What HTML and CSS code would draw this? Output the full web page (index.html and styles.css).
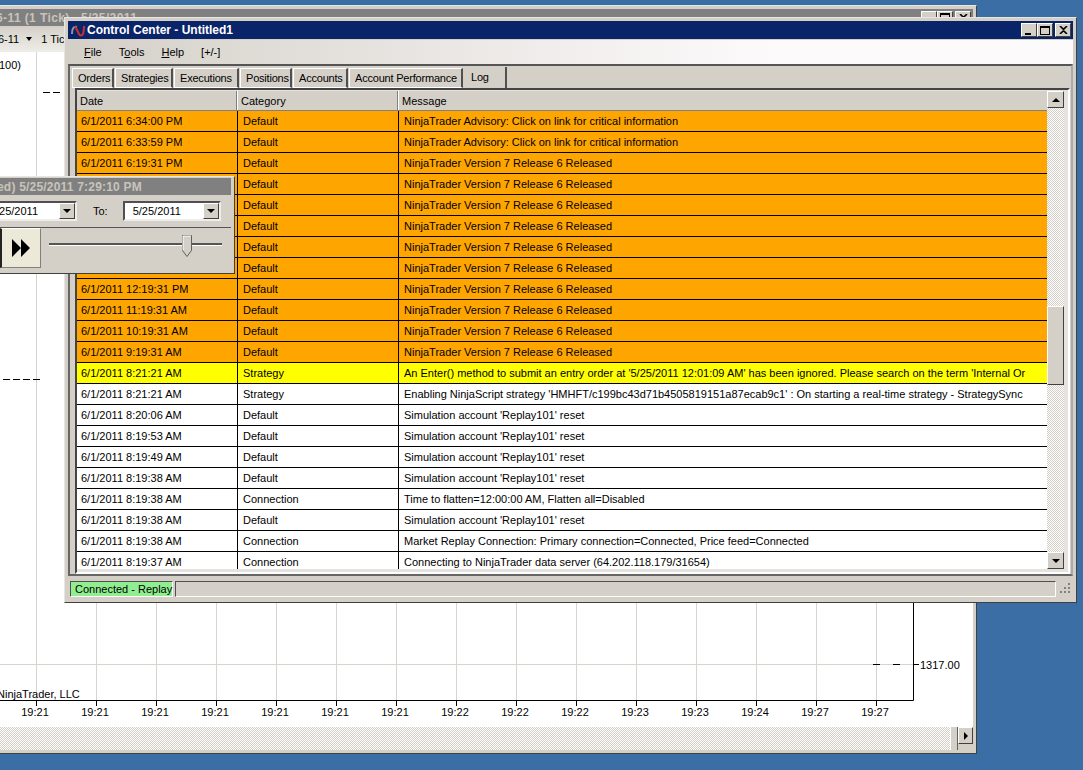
FILE: index.html
```html
<!DOCTYPE html>
<html lang="en">
<head>
    <meta charset="UTF-8">
    <title>Control Center - Untitled1</title>
    <link rel="stylesheet" href="styles.css">
</head>
<body>
    <!-- chart window behind everything -->
    <div class="window chart-window">
        <div class="titlebar inactive chart-title">
            <span class="chart-title-text">6-11 (1 Tick)&nbsp;&nbsp; 5/25/2011</span>
            <div class="caption-btns">
                <span class="cap-btn"><i class="ic-min"></i></span>
                <span class="cap-btn"><i class="ic-max"></i></span>
                <span class="cap-btn"><svg width="9" height="8" viewBox="0 0 9 8"><path d="M1 0l3.500 3.300L8 0M1 8l3.500-3.300L8 8" fill="none" stroke="#000" stroke-width="1.600"/></svg></span>
            </div>
        </div>
        <div class="chart-toolbar">
            <span>6-11</span>
            <span class="tb-arrow"></span>
            <span class="tb-tick">1 Tick</span>
        </div>
        <div class="chart-area">
            <svg class="chart-lines" width="977" height="675" viewBox="0 0 977 675" fill="none">
                <g stroke="#d8d4d0" stroke-width="1">
                    <path d="M36.500 0V648M96.500 0V648M156.500 0V648M216.500 0V648M276.500 0V648M336.500 0V648M396.500 0V648M456.500 0V648M516.500 0V648M576.500 0V648M636.500 0V648M696.500 0V648M756.500 0V648M816.500 0V648M876.500 0V648"/>
                    <path d="M0 612.500H913"/>
                </g>
                <g stroke="#000" stroke-width="1">
                    <path d="M0 648.500H913.500V0"/>
                    <path d="M36.500 649v5M96.500 649v5M156.500 649v5M216.500 649v5M276.500 649v5M336.500 649v5M396.500 649v5M456.500 649v5M516.500 649v5M576.500 649v5M636.500 649v5M696.500 649v5M756.500 649v5M816.500 649v5M876.500 649v5"/>
                    <path d="M914 612.500h5"/>
                    <path d="M873 612.500h7M893 612.500h7"/>
                    <path d="M43 40.500h7M53 40.500h7"/>
                    <path d="M3 327.500h7M13 327.500h7M23 327.500h7M33 327.500h7"/>
                </g>
            </svg>
            <span class="price-top">100)</span>
            <span class="copyright">NinjaTrader, LLC</span>
            <span class="price-label">1317.00</span>
            <div class="time-axis">
                <span>19:21</span><span>19:21</span><span>19:21</span><span>19:21</span><span>19:21</span>
                <span>19:21</span><span>19:21</span><span>19:22</span><span>19:22</span><span>19:22</span>
                <span>19:23</span><span>19:23</span><span>19:24</span><span>19:27</span><span>19:27</span>
            </div>
        </div>
        <div class="chart-scroll">
            <div class="hscroll-track"></div>
            <div class="hscroll-thumb"></div>
            <div class="scroll-btn hscroll-btn"><span class="arrow-right"></span></div>
        </div>
    </div>

    <!-- control center -->
    <div class="window cc-window">
        <div class="titlebar active">
            <svg class="cc-logo" width="15" height="13" viewBox="0 0 15 13" fill="none">
                <path d="M1 10C1 4 3 2 6 3" stroke="#8a93a8" stroke-width="2"/>
                <path d="M4 2l4 8c1 2 3 2 4 0 1-3 1-5 1-8" stroke="#c8342c" stroke-width="2"/>
            </svg>
            <span class="cc-title">Control Center - Untitled1</span>
            <div class="caption-btns">
                <span class="cap-btn"><i class="ic-min"></i></span>
                <span class="cap-btn"><i class="ic-max"></i></span>
                <span class="cap-btn"><svg width="9" height="8" viewBox="0 0 9 8"><path d="M1 0l3.500 3.300L8 0M1 8l3.500-3.300L8 8" fill="none" stroke="#000" stroke-width="1.600"/></svg></span>
            </div>
        </div>
        <div class="menubar">
            <span class="menu-item"><u>F</u>ile</span>
            <span class="menu-item">T<u>o</u>ols</span>
            <span class="menu-item"><u>H</u>elp</span>
            <span class="menu-item">[+/-]</span>
        </div>
        <div class="tab-pane">
            <div class="tabstrip">
                <span class="tab tab-orders">Orders</span>
                <span class="tab tab-strategies">Strategies</span>
                <span class="tab tab-executions">Executions</span>
                <span class="tab tab-positions">Positions</span>
                <span class="tab tab-accounts">Accounts</span>
                <span class="tab tab-perf">Account Performance</span>
                <span class="tab tab-active">Log</span>
            </div>
            <div class="grid-frame">
                <div class="grid-main">
                    <div class="log-head">
                        <div class="cell col-date">Date</div>
                        <div class="cell col-cat">Category</div>
                        <div class="cell col-msg">Message</div>
                    </div>
                    <div class="log-body">
                        <div class="row orange"><div class="cell col-date">6/1/2011 6:34:00 PM</div><div class="cell col-cat">Default</div><div class="cell col-msg">NinjaTrader Advisory: Click on link for critical information</div></div>
                        <div class="row orange"><div class="cell col-date">6/1/2011 6:33:59 PM</div><div class="cell col-cat">Default</div><div class="cell col-msg">NinjaTrader Advisory: Click on link for critical information</div></div>
                        <div class="row orange"><div class="cell col-date">6/1/2011 6:19:31 PM</div><div class="cell col-cat">Default</div><div class="cell col-msg">NinjaTrader Version 7 Release 6 Released</div></div>
                        <div class="row orange"><div class="cell col-date">6/1/2011 5:19:31 PM</div><div class="cell col-cat">Default</div><div class="cell col-msg">NinjaTrader Version 7 Release 6 Released</div></div>
                        <div class="row orange"><div class="cell col-date">6/1/2011 4:19:31 PM</div><div class="cell col-cat">Default</div><div class="cell col-msg">NinjaTrader Version 7 Release 6 Released</div></div>
                        <div class="row orange"><div class="cell col-date">6/1/2011 3:19:31 PM</div><div class="cell col-cat">Default</div><div class="cell col-msg">NinjaTrader Version 7 Release 6 Released</div></div>
                        <div class="row orange"><div class="cell col-date">6/1/2011 2:19:31 PM</div><div class="cell col-cat">Default</div><div class="cell col-msg">NinjaTrader Version 7 Release 6 Released</div></div>
                        <div class="row orange"><div class="cell col-date">6/1/2011 1:19:31 PM</div><div class="cell col-cat">Default</div><div class="cell col-msg">NinjaTrader Version 7 Release 6 Released</div></div>
                        <div class="row orange"><div class="cell col-date">6/1/2011 12:19:31 PM</div><div class="cell col-cat">Default</div><div class="cell col-msg">NinjaTrader Version 7 Release 6 Released</div></div>
                        <div class="row orange"><div class="cell col-date">6/1/2011 11:19:31 AM</div><div class="cell col-cat">Default</div><div class="cell col-msg">NinjaTrader Version 7 Release 6 Released</div></div>
                        <div class="row orange"><div class="cell col-date">6/1/2011 10:19:31 AM</div><div class="cell col-cat">Default</div><div class="cell col-msg">NinjaTrader Version 7 Release 6 Released</div></div>
                        <div class="row orange"><div class="cell col-date">6/1/2011 9:19:31 AM</div><div class="cell col-cat">Default</div><div class="cell col-msg">NinjaTrader Version 7 Release 6 Released</div></div>
                        <div class="row yellow"><div class="cell col-date">6/1/2011 8:21:21 AM</div><div class="cell col-cat">Strategy</div><div class="cell col-msg">An Enter() method to submit an entry order at '5/25/2011 12:01:09 AM' has been ignored. Please search on the term 'Internal Or</div></div>
                        <div class="row"><div class="cell col-date">6/1/2011 8:21:21 AM</div><div class="cell col-cat">Strategy</div><div class="cell col-msg">Enabling NinjaScript strategy 'HMHFT/c199bc43d71b4505819151a87ecab9c1' : On starting a real-time strategy - StrategySync</div></div>
                        <div class="row"><div class="cell col-date">6/1/2011 8:20:06 AM</div><div class="cell col-cat">Default</div><div class="cell col-msg">Simulation account 'Replay101' reset</div></div>
                        <div class="row"><div class="cell col-date">6/1/2011 8:19:53 AM</div><div class="cell col-cat">Default</div><div class="cell col-msg">Simulation account 'Replay101' reset</div></div>
                        <div class="row"><div class="cell col-date">6/1/2011 8:19:49 AM</div><div class="cell col-cat">Default</div><div class="cell col-msg">Simulation account 'Replay101' reset</div></div>
                        <div class="row"><div class="cell col-date">6/1/2011 8:19:38 AM</div><div class="cell col-cat">Default</div><div class="cell col-msg">Simulation account 'Replay101' reset</div></div>
                        <div class="row"><div class="cell col-date">6/1/2011 8:19:38 AM</div><div class="cell col-cat">Connection</div><div class="cell col-msg">Time to flatten=12:00:00 AM, Flatten all=Disabled</div></div>
                        <div class="row"><div class="cell col-date">6/1/2011 8:19:38 AM</div><div class="cell col-cat">Default</div><div class="cell col-msg">Simulation account 'Replay101' reset</div></div>
                        <div class="row"><div class="cell col-date">6/1/2011 8:19:38 AM</div><div class="cell col-cat">Connection</div><div class="cell col-msg">Market Replay Connection: Primary connection=Connected, Price feed=Connected</div></div>
                        <div class="row"><div class="cell col-date">6/1/2011 8:19:37 AM</div><div class="cell col-cat">Connection</div><div class="cell col-msg">Connecting to NinjaTrader data server (64.202.118.179/31654)</div></div>
                    </div>
                </div>
                <div class="vscroll">
                    <div class="scroll-btn"><span class="arrow-up"></span></div>
                    <div class="vscroll-track">
                        <div class="vscroll-thumb"></div>
                    </div>
                    <div class="scroll-btn"><span class="arrow-down"></span></div>
                </div>
            </div>
        </div>
        <div class="statusbar">
            <span class="status-conn">Connected - Replay</span>
            <span class="status-rest"></span>
            <svg class="grip" width="13" height="13" viewBox="0 0 13 13" fill="#808080">
                <path d="M10 1h2v2h-2zM6 5h2v2H6zM10 5h2v2h-2zM2 9h2v2H2zM6 9h2v2H6zM10 9h2v2h-2z"/>
            </svg>
        </div>
    </div>

    <!-- replay controller -->
    <div class="window replay-window">
        <div class="titlebar replay-title">ed) 5/25/2011 7:29:10 PM</div>
        <div class="replay-dates">
            <div class="combo combo-from"><span>25/2011</span><span class="combo-btn"><span class="arrow-down"></span></span></div>
            <span class="to-label">To:</span>
            <div class="combo combo-to"><span>5/25/2011</span><span class="combo-btn"><span class="arrow-down"></span></span></div>
        </div>
        <div class="replay-controls">
            <div class="play-btn">
                <svg width="18" height="18" viewBox="0 0 18 18"><path d="M0 0l9 9-9 9zM9 0l9 9-9 9z"/></svg>
            </div>
            <div class="slider">
                <div class="slider-line"></div>
                <svg class="slider-knob" width="10" height="23" viewBox="0 0 10 23">
                    <path d="M.5.500h9v15l-4.500 6-4.500-6z" fill="#d4d0c8" stroke="#606060"/>
                    <path d="M1 15V1h8" fill="none" stroke="#fff"/>
                </svg>
            </div>
        </div>
    </div>
</body>
</html>
```

FILE: styles.css
```css
/* desktop */
body {
    margin: 0;
    width: 1083px;
    height: 770px;
    overflow: hidden;
    position: relative;
    background-color: #3a6ea5;
    font-family: "Liberation Sans", Arial, sans-serif;
    font-size: 11px;
    color: #000;
}

/* classic raised window */
.window {
    position: absolute;
    box-sizing: border-box;
    background-color: #d4d0c8;
    border: 1px solid;
    border-color: #e8e6e0 #404040 #404040 #e8e6e0;
    padding: 3px;
    display: flex;
    flex-direction: column;
}

.titlebar {
    display: flex;
    align-items: center;
    flex-shrink: 0;
    font-weight: bold;
    font-size: 12px;
    white-space: nowrap;
}

.titlebar.active {
    height: 18px;
    background-color: #0a246a;
    color: #fff;
}

.titlebar.inactive {
    height: 17px;
    background-color: #808080;
    color: #c8c4bc;
}

.caption-btns {
    margin-left: auto;
    display: flex;
    padding-right: 2px;
}

.cap-btn {
    width: 16px;
    height: 14px;
    box-sizing: border-box;
    background-color: #d4d0c8;
    border: 1px solid;
    border-color: #fff #404040 #404040 #fff;
    display: flex;
    align-items: center;
    justify-content: center;
}

.cap-btn:last-child {
    margin-left: 2px;
}

.ic-min {
    width: 6px;
    height: 2px;
    background-color: #000;
    margin-top: 8px;
    margin-right: 2px;
}

.ic-max {
    width: 10px;
    height: 9px;
    box-sizing: border-box;
    border: 1px solid #000;
    border-top-width: 2px;
}

/* chart window */
.chart-window {
    left: -40px;
    top: 5px;
    width: 1017px;
    height: 749px;
    padding: 3px 3px 3px 0;
}

.chart-title-text {
    margin-left: 35px;
    letter-spacing: 0.4px;
}

.chart-toolbar {
    height: 26px;
    box-sizing: border-box;
    flex-shrink: 0;
    display: flex;
    align-items: center;
    padding-left: 37px;
    padding-bottom: 1px;
    gap: 7px;
    background: linear-gradient(#d4d0c8, #efede8);
}

.tb-arrow {
    width: 0;
    height: 0;
    border: 3px solid transparent;
    border-top: 4px solid #000;
    border-bottom: 0;
}

.tb-tick {
    margin-left: 2px;
}

.chart-area {
    position: relative;
    height: 675px;
    flex-shrink: 0;
    background-color: #fff;
    overflow: hidden;
}

.chart-lines {
    position: absolute;
    left: 39px;
    top: 0;
}

.price-top {
    position: absolute;
    left: 38px;
    top: 7px;
}

.copyright {
    position: absolute;
    left: 36px;
    top: 636px;
}

.price-label {
    position: absolute;
    left: 959px;
    top: 607px;
}

.time-axis {
    position: absolute;
    left: 44px;
    top: 654px;
    display: flex;
}

.time-axis span {
    width: 60px;
    text-align: center;
}

.chart-scroll {
    flex: 1;
    display: flex;
    background-color: #d4d0c8;
}

.hscroll-track {
    flex: 1;
    background: repeating-conic-gradient(#d4d0c8 0 25%, #fff 0 50%) 0 0 / 2px 2px;
}

.hscroll-thumb {
    width: 8px;
    box-sizing: border-box;
    background-color: #d4d0c8;
    border-left: 1px solid #fff;
    border-right: 1px solid #606060;
}

.hscroll-btn {
    width: 15px;
    height: auto;
}

/* scrollbar bits shared by both windows */
.scroll-btn {
    box-sizing: border-box;
    flex-shrink: 0;
    height: 17px;
    background-color: #d4d0c8;
    border: 1px solid;
    border-color: #fff #404040 #404040 #fff;
    display: flex;
    align-items: center;
    justify-content: center;
}

.arrow-up, .arrow-down, .arrow-right {
    width: 0;
    height: 0;
    display: block;
    border: 4px solid transparent;
}

.arrow-up {
    border-top: 0;
    border-bottom-color: #000;
}

.arrow-down {
    border-bottom: 0;
    border-top-color: #000;
}

.arrow-right {
    border-right: 0;
    border-left-color: #000;
}

/* control center window */
.cc-window {
    left: 64px;
    top: 17px;
    width: 1013px;
    height: 586px;
}

.cc-logo {
    margin: 0 1px 0 3px;
}

.menubar {
    height: 24px;
    flex-shrink: 0;
    margin-top: 1px;
    display: flex;
    align-items: center;
    padding-left: 16px;
    gap: 17px;
    background: linear-gradient(to right, #d4d0c8, #fdfafc 70%);
    font-size: 11px;
}

.tab-pane {
    height: 512px;
    flex-shrink: 0;
    box-sizing: border-box;
    border: 2px solid;
    border-color: #555 #aaa #666 #666;
}

.tabstrip {
    height: 22px;
    display: flex;
    align-items: flex-end;
    padding-left: 2px;
    gap: 1px;
}

.tab {
    box-sizing: border-box;
    height: 20px;
    padding-left: 5px;
    display: flex;
    align-items: center;
    white-space: nowrap;
    letter-spacing: -0.2px;
    border: 1px solid #fff;
    border-right: 2px solid #505050;
}

.tab-orders { width: 42px; }
.tab-strategies { width: 58px; }
.tab-executions { width: 65px; }
.tab-positions { width: 52px; }
.tab-accounts { width: 55px; }
.tab-perf { width: 114px; }

.tab-active {
    width: 44px;
    height: 21px;
    margin-left: -1px;
    padding: 0 0 2px 8px;
    border-top: 0;
    border-bottom: 0;
    border-left: 0;
}

.grid-frame {
    height: 486px;
    margin: 0 1px 0 5px;
    box-sizing: border-box;
    border: 2px solid;
    border-color: #444 #fff #fff #444;
    display: flex;
    padding: 1px 4px 3px 0;
    background-color: #e6e3de;
}

.grid-main {
    flex: 1;
    min-width: 0;
    display: flex;
    flex-direction: column;
    overflow: hidden;
}

.log-head {
    height: 20px;
    flex-shrink: 0;
    display: flex;
    background-color: #d4d0c8;
    border-bottom: 1px solid #808080;
    box-sizing: border-box;
}

.log-head .cell {
    border-right: 1px solid #fff;
    box-shadow: inset -1px 0 0 #808080;
    padding-left: 3px;
    line-height: 21px;
}

.log-body {
    flex: 1;
    overflow: hidden;
    background-color: #fff;
}

.row {
    height: 21px;
    box-sizing: border-box;
    display: flex;
    background-color: #fff;
    border-bottom: 1px solid #000;
}

.row.orange {
    background-color: #ffa500;
}

.row.yellow {
    background-color: #ff0;
}

.cell {
    box-sizing: border-box;
    flex-shrink: 0;
    overflow: hidden;
    white-space: nowrap;
    padding-left: 5px;
    line-height: 20px;
    border-right: 1px solid #000;
}

.row .col-date {
    padding-left: 4px;
}

.col-date, .col-cat {
    width: 161px;
}

.col-msg {
    width: 648px;
    border-right: 0 !important;
    box-shadow: none !important;
}

.vscroll {
    width: 17px;
    flex-shrink: 0;
    display: flex;
    flex-direction: column;
}

.vscroll-track {
    flex: 1;
    background: repeating-conic-gradient(#d4d0c8 0 25%, #fff 0 50%) 0 0 / 2px 2px;
    position: relative;
}

.vscroll-thumb {
    position: absolute;
    left: 0;
    right: 0;
    top: 198px;
    height: 79px;
    box-sizing: border-box;
    background-color: #d4d0c8;
    border: 1px solid;
    border-color: #fff #404040 #404040 #fff;
}

.statusbar {
    flex: 1;
    display: flex;
    align-items: center;
    padding: 3px 2px 1px;
    gap: 2px;
    min-height: 0;
}

.status-conn {
    box-sizing: border-box;
    width: 103px;
    height: 16px;
    line-height: 14px;
    padding-left: 4px;
    background-color: #90ee90;
    border: 1px solid;
    border-color: #505050 #fff #fff #505050;
    white-space: nowrap;
}

.status-rest {
    flex: 1;
    height: 16px;
    box-sizing: border-box;
    border: 1px solid;
    border-color: #505050 #fff #fff #505050;
}

.grip {
    flex-shrink: 0;
}

/* replay controller */
.replay-window {
    left: -60px;
    top: 176px;
    width: 295px;
    height: 98px;
    padding: 1px 3px 3px 3px;
}

.replay-title {
    height: 17px;
    background-color: #808080;
    color: #c8c4bc;
    padding-left: 53px;
    letter-spacing: 0.2px;
}

.replay-dates {
    height: 33px;
    box-sizing: border-box;
    flex-shrink: 0;
    display: flex;
    align-items: center;
    border-bottom: 1px solid #555;
}

.combo {
    box-sizing: border-box;
    height: 20px;
    display: flex;
    align-items: center;
    justify-content: space-between;
    background-color: #fff;
    border: 2px solid;
    border-color: #505050 #eee #eee #505050;
    padding-left: 8px;
}

.combo-from {
    width: 133px;
    padding-left: 0;
    justify-content: flex-end;
    gap: 21px;
}

.to-label {
    margin: 0 15px 0 16px;
}

.combo-to {
    width: 98px;
}

.combo-btn {
    box-sizing: border-box;
    width: 16px;
    height: 16px;
    background-color: #d4d0c8;
    border: 1px solid;
    border-color: #fff #404040 #404040 #fff;
    display: flex;
    align-items: center;
    justify-content: center;
}

.replay-controls {
    flex: 1;
    display: flex;
    align-items: stretch;
    margin-bottom: 2px;
}

.play-btn {
    box-sizing: border-box;
    width: 41px;
    margin-left: 56px;
    background-color: #ece9d8;
    border-left: 2px solid #222;
    border-top: 1px solid #fff;
    border-right: 1px solid #808080;
    border-bottom: 1px solid #808080;
    display: flex;
    align-items: center;
    justify-content: center;
}

.slider {
    flex: 1;
    position: relative;
}

.slider-line {
    position: absolute;
    left: 8px;
    right: 9px;
    top: 15px;
    height: 2px;
    background-color: #555;
    box-shadow: 0 1px 0 #fff;
}

.slider-knob {
    position: absolute;
    left: 141px;
    top: 7px;
}
```
